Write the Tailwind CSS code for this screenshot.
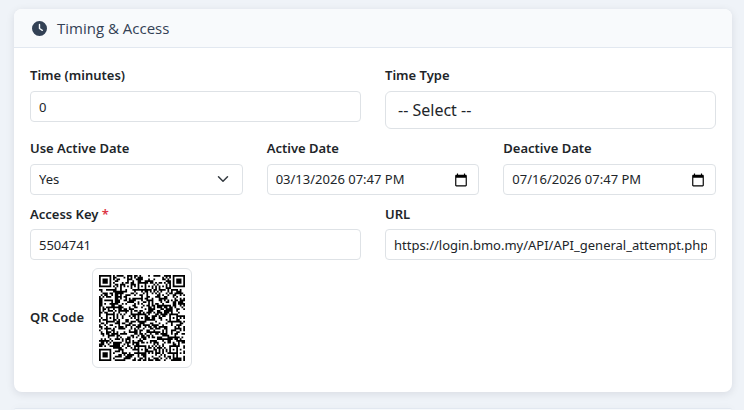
<!DOCTYPE html>
<html lang="en">
<head>
<meta charset="utf-8">
<title>Timing &amp; Access</title>
<script src="https://cdn.jsdelivr.net/npm/@tailwindcss/browser@4"></script>
</head>
<body class="flex h-screen flex-col overflow-hidden bg-[#eff3f8] px-3 pt-[9px] pl-3.5 font-['Noto_Sans',sans-serif] text-[13px] text-[#212529]">
<main class="flex grow flex-col gap-4">
  <section class="rounded-lg bg-white shadow-[0_2px_8px_rgba(15,23,42,0.10)]">
    <header class="flex items-center gap-2.5 rounded-t-lg border-b border-[#e2e8f0] bg-[#f8fafc] px-[18px] text-[#334155]">
      <svg class="size-[15px]" viewBox="0 0 512 512" fill="currentColor" aria-hidden="true"><path fill-rule="evenodd" d="M256 0a256 256 0 1 1 0 512A256 256 0 1 1 256 0zM232 120V256c0 8 4 15.500 10.700 20l96 64c11 7.400 25.900 4.400 33.300-6.700s4.400-25.900-6.700-33.300L280 243.200V120c0-13.300-10.700-24-24-24s-24 10.700-24 24z"/></svg>
      <h2 class="font-['Open_Sans',sans-serif] text-[15px] leading-[38px] font-medium">Timing &amp; Access</h2>
    </header>
    <form class="flex flex-col gap-2 px-4 pt-4 pb-6">
      <div class="grid grid-cols-2 items-start gap-6">
        <div>
          <label for="time" class="mb-1 block leading-[23px] font-semibold">Time (minutes)</label>
          <input id="time" type="text" value="0" class="block h-[31px] w-full rounded border border-[#dee2e6] bg-white px-2">
        </div>
        <div>
          <label for="type" class="mb-1 block leading-[23px] font-semibold">Time Type</label>
          <select id="type" class="block h-[38px] w-full appearance-none rounded-md border border-[#dee2e6] bg-white px-3 text-base"><option>-- Select --</option></select>
        </div>
      </div>
      <div class="grid grid-cols-3 gap-6">
        <div>
          <label for="use" class="mb-1 block leading-[23px] font-semibold">Use Active Date</label>
          <div class="relative">
            <select id="use" class="block h-[31px] w-full appearance-none rounded border border-[#dee2e6] bg-white px-2"><option>Yes</option><option>No</option></select>
            <svg class="pointer-events-none absolute top-[9px] right-3.5 size-3" viewBox="0 0 16 16" fill="none" stroke="#343a40" stroke-width="2" stroke-linecap="round" stroke-linejoin="round" aria-hidden="true"><path d="m2 5 6 6 6-6"/></svg>
          </div>
        </div>
        <div>
          <label for="active" class="mb-1 block leading-[23px] font-semibold">Active Date</label>
          <div class="flex h-[31px] items-center rounded border border-[#dee2e6] bg-white pr-2.5 pl-2">
            <input id="active" type="text" value="03/13/2026 07:47 PM" class="min-w-0 grow">
            <button type="button" aria-label="Pick active date"><svg class="size-[14px]" viewBox="0 0 24 24" fill="#000" aria-hidden="true"><path d="M20 3h-1V1h-2v2H7V1H5v2H4c-1.100 0-2 .9-2 2v16c0 1.100.9 2 2 2h16c1.100 0 2-.9 2-2V5c0-1.100-.9-2-2-2zm0 18H4V8h16v13z"/></svg></button>
          </div>
        </div>
        <div>
          <label for="deactive" class="mb-1 block leading-[23px] font-semibold">Deactive Date</label>
          <div class="flex h-[31px] items-center rounded border border-[#dee2e6] bg-white pr-2.5 pl-2">
            <input id="deactive" type="text" value="07/16/2026 07:47 PM" class="min-w-0 grow">
            <button type="button" aria-label="Pick deactive date"><svg class="size-[14px]" viewBox="0 0 24 24" fill="#000" aria-hidden="true"><path d="M20 3h-1V1h-2v2H7V1H5v2H4c-1.100 0-2 .9-2 2v16c0 1.100.9 2 2 2h16c1.100 0 2-.9 2-2V5c0-1.100-.9-2-2-2zm0 18H4V8h16v13z"/></svg></button>
          </div>
        </div>
      </div>
      <div class="grid grid-cols-2 gap-6">
        <div>
          <label for="key" class="mb-[3px] block leading-[23px] font-semibold">Access Key <span class="text-[#dc3545]">*</span></label>
          <input id="key" type="text" value="5504741" class="block h-[31px] w-full rounded border border-[#dee2e6] bg-white px-2">
        </div>
        <div>
          <label for="url" class="mb-[3px] block leading-[23px] font-semibold">URL</label>
          <input id="url" type="text" value="https://login.bmo.my/API/API_general_attempt.php?key=5504741" class="block h-[31px] w-full rounded border border-[#dee2e6] bg-white px-2">
        </div>
      </div>
      <div class="flex items-center gap-2">
        <span class="font-semibold">QR Code</span>
        <div class="size-[100px] rounded-md border border-[#dee2e6] bg-white p-1.5">
          <svg id="qr" class="size-full" viewBox="0 0 49 49" role="img" aria-label="QR Code"><path fill="#000"/></svg>
        </div>
      </div>
    </form>
  </section>
  <section class="grow rounded-t-lg border-t border-[#e2e8f0] bg-[#f8fafc] shadow-[0_2px_8px_rgba(15,23,42,0.10)]"></section>
</main>
<script>
  // 49x49 code: finder, timing and alignment patterns over the data modules
  const N = 49, grid = [];
  let seed = 5504741;
  const next = () => { seed ^= seed << 13; seed ^= seed >>> 17; seed ^= seed << 5; return (seed >>> 0) / 4294967296; };
  for (let y = 0; y < N; y++) { grid.push([]); for (let x = 0; x < N; x++) grid[y].push(next() < 0.5); }
  for (let i = 0; i < N; i++) grid[6][i] = grid[i][6] = i % 2 === 0;
  const rings = (cx, cy, r, dark) => {
    for (let y = cy - r; y <= cy + r; y++) for (let x = cx - r; x <= cx + r; x++)
      if (x >= 0 && y >= 0 && x < N && y < N) grid[y][x] = dark(Math.max(Math.abs(x - cx), Math.abs(y - cy)));
  };
  for (const [x, y] of [[3, 3], [45, 3], [3, 45]]) rings(x, y, 4, d => d < 2 || d === 3);
  for (const [x, y] of [[24, 6], [6, 24], [24, 24], [42, 24], [24, 42], [42, 42]]) rings(x, y, 2, d => d !== 1);
  let d = '';
  grid.forEach((row, y) => row.forEach((on, x) => { if (on) d += `M${x} ${y}h1v1h-1z`; }));
  document.querySelector('#qr path').setAttribute('d', d);
</script>
</body>
</html>
